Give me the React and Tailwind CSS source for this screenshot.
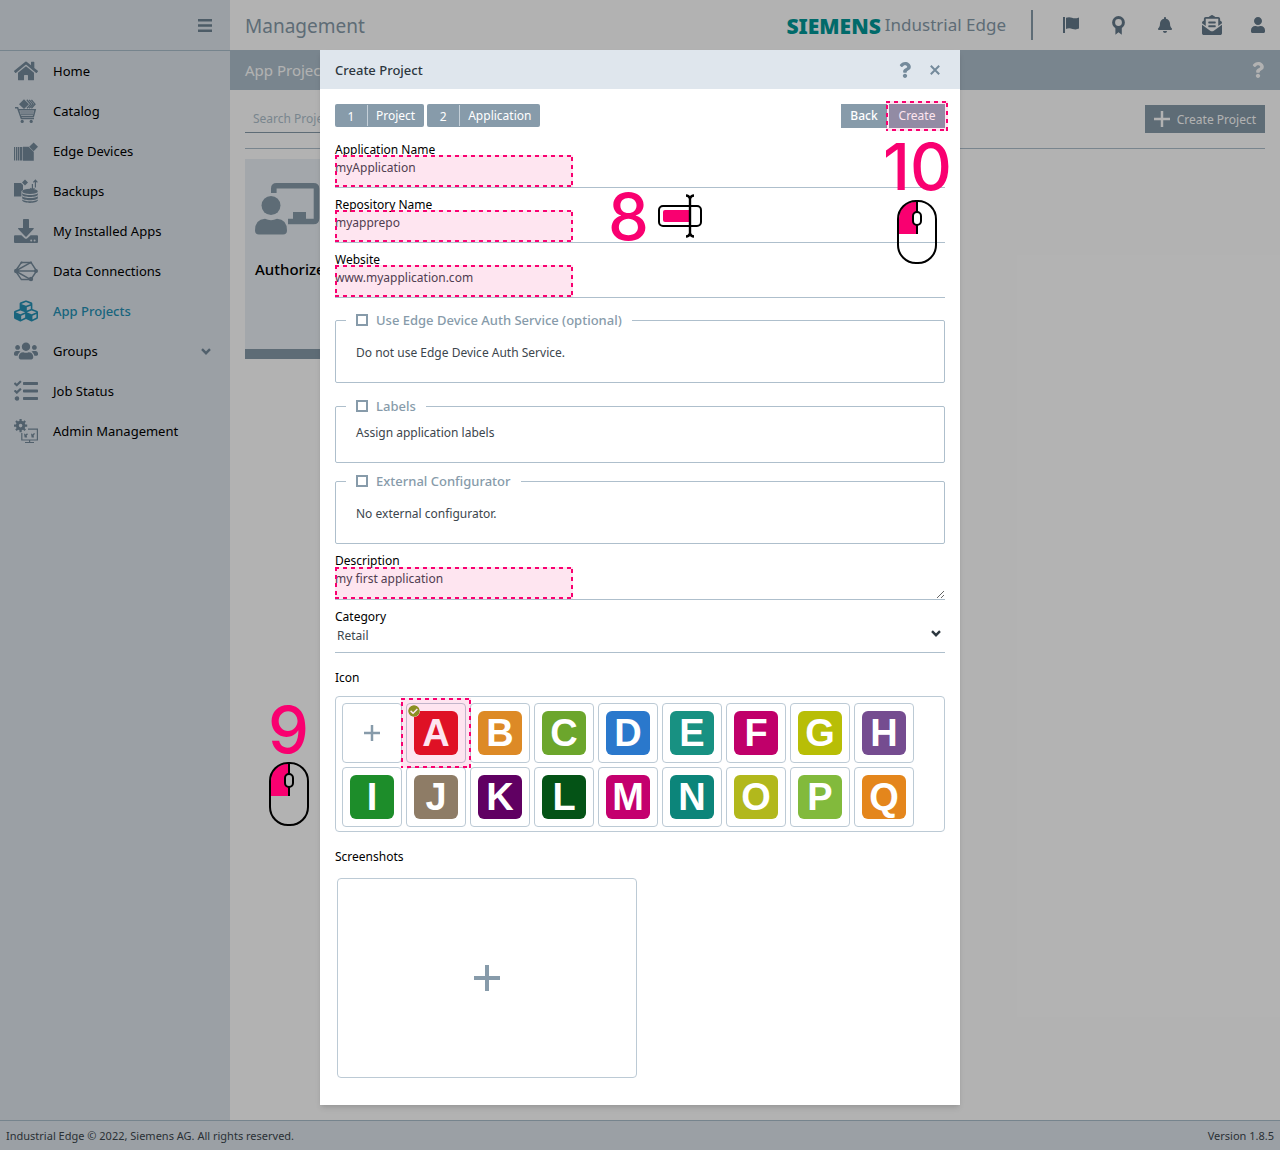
import React from "react";
import {
  FaHome,
  FaCubes,
  FaUsers,
  FaTasks,
  FaBell,
  FaEnvelopeOpenText,
  FaUser,
  FaQuestion,
  FaCheckCircle,
} from "react-icons/fa";

const svg = (children) => (
  <svg viewBox="0 0 24 24" className="size-6" fill="currentColor" aria-hidden="true">
    {children}
  </svg>
);

const CatalogIcon = () =>
  svg(
    <>
      <path d="M10 0.2 15 5.2 10 10 5 5.2Z" />
      <g fill="none" stroke="currentColor" strokeWidth="1.300">
        <path d="M12.800 .8 16.800 5.200 13 9.200M15.200 .8 19 5.200 15.200 9.200M17.400 .8 21 5.200 17.400 9.200" />
        <path d="M1 8.800h2.600L7.400 19.600H20" strokeWidth="1.500" />
        <path d="M4.800 10.800H21.200L19.400 17.400H6.600" strokeWidth="1.500" />
        <path d="M6.200 13h13.400M7 15.200h12" strokeWidth="1.200" />
      </g>
      <circle cx="8.200" cy="22.400" r="1.600" />
      <circle cx="17.200" cy="22.400" r="1.600" />
    </>
  );

const EdgeIcon = () =>
  svg(
    <>
      <path d="M0 8h1.200v13.600H0zM2 8h1.200v13.600H2zM3.800 8h1.600v13.600H3.800zM6 8h2.400v13.600H6z" />
      <path d="M9 7.800h5.600L19.800 13v8.800H9z" />
      <path d="M19.600 3.400 24 7.800 19.600 12.200 15.200 7.800Z" />
    </>
  );

const BackupsIcon = () =>
  svg(
    <>
      <path d="M0 4h7l2 2v5l-1.600 1v5.400H0z" />
      <path d="M11 .6 14 3.600 11 6.600 8 3.600Z" />
      <path d="M18.400 5v6M16.400 9.200l2 2.200 2-2.200M21.400 8.500V1.600M19.400 3.400l2-2.200 2 2.200" fill="none" stroke="currentColor" strokeWidth="1.200" />
      <ellipse cx="16" cy="12.400" rx="7.800" ry="2.600" />
      <path d="M8.200 14.200c1.600 2.400 14 2.400 15.600 0v1.900c-1.400 2.600-14.200 2.600-15.600 0zM8.200 17.300c1.600 2.400 14 2.400 15.600 0v1.900c-1.400 2.600-14.200 2.600-15.600 0zM8.200 20.400c1.600 2.400 14 2.400 15.600 0v1.200c-1.400 3.200-14.200 3.200-15.600 0z" />
    </>
  );

const InstalledIcon = () =>
  svg(
    <>
      <path d="M9 .8Q9 0 9.800 0h4.400q.8 0 .8.8V9h4.400q.8.2.2 1L12.600 17.400q-.6.6-1.200 0L4.200 10q-.6-.8.4-1H9z" />
      <path
        fillRule="evenodd"
        d="M1 16.200h6.400l3.200 3q1.400 1 2.800 0l3.200-3H23q1 0 1 1V23q0 1-1 1H1q-1 0-1-1v-5.800q0-1 1-1zM16.200 21.400a1 1 0 1 0 2 0 1 1 0 1 0-2 0zM19.600 21.400a1 1 0 1 0 2 0 1 1 0 1 0-2 0z"
      />
    </>
  );

const ConnectionsIcon = () =>
  svg(
    <>
      <g fill="none" stroke="currentColor" strokeWidth="1.500">
        <path d="M1.500 12 7.400 3.400H17L22.600 12 16.800 20.600H7.400Z" />
        <path d="M1.500 12H22.600M1.500 12 17 3.400M1.500 12 16.800 20.600" />
      </g>
      <circle cx="2.200" cy="12" r="2.200" />
      <circle cx="22" cy="12" r="2" />
      <circle cx="17" cy="20" r="2.200" />
      <circle cx="7.600" cy="3.600" r="1.100" />
      <circle cx="17" cy="3.600" r="1.100" />
    </>
  );

const AdminIcon = () =>
  svg(
    <>
      <circle cx="6.600" cy="6.600" r="3.300" fill="none" stroke="currentColor" strokeWidth="3" />
      <g stroke="currentColor" strokeWidth="2.200">
        <path d="M6.600 0v3M6.600 10.200v3M0 6.600h3M10.200 6.600h3M2 2l2.200 2.200M9 9l2.200 2.200M11.200 2 9 4.200M4.200 9 2 11.200" />
      </g>
      <path d="M14 10.200H23.400V21H7.800V14" fill="none" stroke="currentColor" strokeWidth="1.200" />
      <path d="M11 23.500h9M15.600 21v2.500" stroke="currentColor" strokeWidth="1.200" />
      <path d="M10 14.200l1.400 1.400 1.400-1 1.400.4-1.600 1.600.6 1.800H10.600l-.2-1.400zM17 14.200l1.400 1.400 1.400-1.400 1.400.4-1.600 2 .4 1.800h-2.400l-.2-1.400z" />
    </>
  );

const FlagIcon = () => (
  <svg viewBox="0 0 16 16" className="size-4" fill="currentColor" aria-hidden="true">
    <path d="M0 0h2v16H0zM3 .8Q6-.4 9 .8t7-.4V11.600Q13 13 9.500 11.900T3 12z" />
  </svg>
);

const RibbonIcon = () => (
  <svg viewBox="0 0 13 19" className="h-[19px] w-[13px]" aria-hidden="true">
    <circle cx="6.500" cy="6.500" r="4.900" fill="none" stroke="currentColor" strokeWidth="3" />
    <path d="M3.400 10.500h6.400V18.800L6.500 16.200 3.400 18.800Z" fill="currentColor" />
  </svg>
);

const BoardIcon = () => (
  <svg viewBox="0 0 65 52" className="h-[52px] w-[65px]" fill="currentColor" aria-hidden="true">
    <path d="M18.800 10V5.500Q18.800 2.800 21.500 2.800H58.500Q61.500 2.800 61.500 5.500V35.500Q61.500 38.500 58.500 38.500H33" fill="none" stroke="currentColor" strokeWidth="5.600" />
    <rect x="38" y="29" width="13" height="10" />
    <circle cx="16" cy="22.500" r="9.500" />
    <path d="M10 35.800Q16 38.600 22 35.800Q32 36.500 32 47.500Q32 51.500 28 51.500H4Q0 51.500 0 47.500Q0 36.500 10 35.800Z" />
  </svg>
);

const Chevron = ({ className }) => (
  <svg viewBox="0 0 10 7" className={`h-[7px] w-2.5 ${className}`} aria-hidden="true">
    <path d="M1 1.200 5 5.200 9 1.200" fill="none" stroke="currentColor" strokeWidth="2.400" />
  </svg>
);

const nav = [
  { label: "Home", icon: <FaHome className="size-6" /> },
  { label: "Catalog", icon: <CatalogIcon /> },
  { label: "Edge Devices", icon: <EdgeIcon /> },
  { label: "Backups", icon: <BackupsIcon /> },
  { label: "My Installed Apps", icon: <InstalledIcon /> },
  { label: "Data Connections", icon: <ConnectionsIcon /> },
  { label: "App Projects", icon: <FaCubes className="size-6" />, active: true },
  { label: "Groups", icon: <FaUsers className="size-6" />, expandable: true },
  { label: "Job Status", icon: <FaTasks className="size-6" /> },
  { label: "Admin Management", icon: <AdminIcon /> },
];

const tiles = [
  ["A", "bg-[#dc131d]"],
  ["B", "bg-[#dd8a26]"],
  ["C", "bg-[#6ca62c]"],
  ["D", "bg-[#2a78cc]"],
  ["E", "bg-[#189182]"],
  ["F", "bg-[#c0006a]"],
  ["G", "bg-[#b8be06]"],
  ["H", "bg-[#754c90]"],
  ["I", "bg-[#1d8d2a]"],
  ["J", "bg-[#8e7c66]"],
  ["K", "bg-[#600062]"],
  ["L", "bg-[#045316]"],
  ["M", "bg-[#c4006e]"],
  ["N", "bg-[#0c857a]"],
  ["O", "bg-[#b2b81c]"],
  ["P", "bg-[#82ba3c]"],
  ["Q", "bg-[#e4861c]"],
];

function Highlight({ className }) {
  return (
    <svg className={`pointer-events-none absolute z-10 bg-[#f90070]/10 ${className}`} aria-hidden="true">
      <rect width="100%" height="100%" fill="none" stroke="#f90070" strokeWidth="4" strokeDasharray="4 4" />
    </svg>
  );
}

function StepNumber({ children, className }) {
  return (
    <span className={`pointer-events-none absolute font-['Inter',sans-serif] text-[65px] leading-[64px] font-medium text-[#f90070] ${className}`}>
      {children}
    </span>
  );
}

function Mouse({ className }) {
  return (
    <svg viewBox="0 0 40 64" className={`pointer-events-none absolute h-16 w-10 ${className}`} aria-hidden="true">
      <path d="M20 1.500V34H2V19Q2 3 20 1.500Z" fill="#f90070" />
      <rect x="1" y="1" width="38" height="62" rx="18" fill="none" stroke="#000" strokeWidth="2" />
      <path d="M20 1V34" stroke="#000" strokeWidth="2" />
      <rect x="16" y="12" width="8" height="13" rx="4" className="fill-white" stroke="#000" strokeWidth="2" />
    </svg>
  );
}

function TypeIcon({ className }) {
  return (
    <svg viewBox="0 0 44 44" className={`pointer-events-none absolute size-11 ${className}`} aria-hidden="true">
      <rect x="1" y="12" width="42" height="20" rx="4" fill="#fff" stroke="#000" strokeWidth="2" />
      <rect x="5" y="16" width="28" height="12" rx="2" fill="#f90070" />
      <path d="M32 3V41M28 1.500Q31 1.500 32 4.500Q33 1.500 36 1.500M28 42.500Q31 42.500 32 39.500Q33 42.500 36 42.500" fill="none" stroke="#000" strokeWidth="2.400" />
    </svg>
  );
}

function Field({ id, label, value }) {
  return (
    <div className="relative pt-[9px]">
      <label htmlFor={id} className="block text-xs leading-4 text-black">{label}</label>
      <input id={id} defaultValue={value} className="block h-[30px] w-full border-b border-[#aebfcc] pb-[11px] text-xs text-[#3c464d] outline-none" />
      <Highlight className="bottom-px left-0 h-8 w-[238px]" />
    </div>
  );
}

function Option({ label, text, className, textClass }) {
  return (
    <fieldset className={`rounded-xs border border-[#aebfcc] px-[10px] ${className}`}>
      <legend className="px-[10px]">
        <label className="flex h-4 items-center gap-2 text-[13px] font-medium text-[#879baa]">
          <input type="checkbox" className="size-3 appearance-none border-2 border-[#879baa] bg-white" />
          <span className="pt-0.5">{label}</span>
        </label>
      </legend>
      <p className={`px-[10px] text-xs leading-[18px] text-[#3c464d] ${textClass}`}>{text}</p>
    </fieldset>
  );
}

function Step({ n, label }) {
  return (
    <button className="flex h-[23px] items-center rounded-xs bg-[#879baa] text-xs text-white">
      <span className="w-8 pt-0.5 text-center">{n}</span>
      <span className="flex h-[21px] items-center border-l border-[#c5d0d9] pr-[9px] pl-2">{label}</span>
    </button>
  );
}

function Plus({ className }) {
  return (
    <svg viewBox="0 0 26 26" className={className} aria-hidden="true">
      <path d="M13 0V26M0 13H26" stroke="currentColor" strokeWidth="4" />
    </svg>
  );
}

function CreateProjectDialog() {
  return (
    <div role="dialog" aria-label="Create Project" className="relative w-full max-w-[640px] bg-white pb-[27px] shadow-md">
      <header className="flex h-[39px] items-center justify-between bg-[#dfe6ed] px-[15px]">
        <h2 className="pt-0.5 text-[13px] font-medium text-[#2d373f]">Create Project</h2>
        <div className="flex items-center gap-[17px] pr-[5px] text-[#748a9b]">
          <button aria-label="Help"><FaQuestion className="size-4" /></button>
          <button aria-label="Close">
            <svg viewBox="0 0 10 10" className="size-2.5" aria-hidden="true">
              <path d="M.8.8 9.200 9.200M9.200.8.8 9.200" stroke="currentColor" strokeWidth="2" />
            </svg>
          </button>
        </div>
      </header>

      <form className="px-[15px] pt-[15px]" onSubmit={(e) => e.preventDefault()}>
        <div className="mb-[5px] flex items-start justify-between">
          <div className="flex gap-[3px]">
            <Step n="1" label="Project" />
            <Step n="2" label="Application" />
          </div>
          <div className="flex gap-[2px] text-xs text-white">
            <button className="h-6 w-[46px] bg-[#879baa] font-medium">Back</button>
            <div className="relative">
              <button className="h-6 w-14 bg-[#879baa]">Create</button>
              <Highlight className="-top-[3px] -left-[3px] h-[30px] w-[calc(100%+6px)]" />
            </div>
          </div>
        </div>

        <Field id="app" label="Application Name" value="myApplication" />
        <Field id="repo" label="Repository Name" value="myapprepo" />
        <Field id="site" label="Website" value="www.myapplication.com" />

        <Option className="mt-[14px] pb-5" textClass="mt-4" label="Use Edge Device Auth Service (optional)" text="Do not use Edge Device Auth Service." />
        <Option className="mt-[15px] pb-5" textClass="mt-[10px]" label="Labels" text="Assign application labels" />
        <Option className="mt-[10px] pb-5" textClass="mt-4" label="External Configurator" text="No external configurator." />

        <div className="relative pt-[9px]">
          <label htmlFor="desc" className="block text-xs leading-4 text-black">Description</label>
          <textarea id="desc" defaultValue="my first application" className="block h-[31px] w-full resize-y overflow-hidden border-b border-[#aebfcc] text-xs leading-5 text-[#3c464d] outline-none" />
          <Highlight className="bottom-px left-0 h-8 w-[238px]" />
        </div>

        <div className="relative pt-[9px]">
          <label htmlFor="cat" className="block text-xs leading-4 text-black">Category</label>
          <select id="cat" className="block h-7 w-full appearance-none border-b border-[#aebfcc] pb-[5px] pl-[2px] text-xs text-[#3c464d] outline-none">
            <option>Retail</option>
          </select>
          <Chevron className="pointer-events-none absolute right-1 bottom-4 text-[#2d373f]" />
        </div>

        <h3 className="mt-4 text-xs leading-[18px] text-black">Icon</h3>
        <div className="mt-[9px] flex flex-wrap gap-1 rounded border border-[#bccad5] px-1.5 pt-1.5 pb-1">
          <button aria-label="Add icon" className="flex size-[60px] items-center justify-center rounded border border-[#bccad5] text-[#879baa]">
            <Plus className="size-4" />
          </button>
          {tiles.map(([letter, bg]) => (
            <div key={letter} className="relative">
              <button className="flex size-[60px] items-center justify-center rounded border border-[#bccad5]">
                <span className={`flex size-11 items-center justify-center rounded-md font-['Liberation_Sans',sans-serif] text-[38px] leading-none font-bold text-white ${bg}`}>{letter}</span>
              </button>
              {letter === "A" && (
                <>
                  <FaCheckCircle className="absolute top-[2px] left-[2px] size-3 rounded-full bg-white text-[#7fa01a]" />
                  <Highlight className="-top-[5px] -left-[5px] size-[70px]" />
                </>
              )}
            </div>
          ))}
        </div>

        <h3 className="mt-4 text-xs leading-[18px] text-black">Screenshots</h3>
        <button aria-label="Add screenshot" className="mt-3 ml-[2px] flex h-[200px] w-[300px] items-center justify-center rounded border border-[#bccad5] text-[#879baa]">
          <Plus className="size-[26px]" />
        </button>
      </form>

      <StepNumber className="top-[135px] left-[288px]">8</StepNumber>
      <TypeIcon className="top-[144px] left-[338px]" />
      <StepNumber className="top-[85px] right-[8px]">10</StepNumber>
      <Mouse className="top-[150px] right-[23px]" />
      <StepNumber className="top-[648px] -left-[52px]">9</StepNumber>
      <Mouse className="top-[712px] -left-[51px] [&_.fill-white]:fill-[#b2b2b2]" />
    </div>
  );
}

export default function App() {
  return (
    <div className="flex min-h-screen flex-col bg-white font-['Noto_Sans',sans-serif]">
      <div className="flex flex-1">
        <aside className="w-[230px] shrink-0 bg-[#dfe6ed]">
          <div className="flex h-[51px] items-center justify-end border-b border-[#aabdcb] pr-[18px] text-[#6f8494]">
            <button aria-label="Toggle menu">
              <svg viewBox="0 0 14 13" className="h-[13px] w-3.5" fill="currentColor" aria-hidden="true">
                <path d="M0 0h14v2.600H0zM0 5.200h14v2.600H0zM0 10.400h14v2.600H0z" />
              </svg>
            </button>
          </div>
          <nav>
            {nav.map((item) => (
              <a
                key={item.label}
                href="#"
                className={`flex h-10 items-center pr-[19px] pl-[14px] text-[13px] ${item.active ? "font-medium text-[#2490b4]" : "text-black"}`}
              >
                <span className={`mr-[15px] ${item.active ? "" : "text-[#748a9b]"}`}>{item.icon}</span>
                <span className="flex-1 pt-0.5">{item.label}</span>
                {item.expandable && <Chevron className="text-[#748a9b]" />}
              </a>
            ))}
          </nav>
        </aside>

        <div className="min-w-0 flex-1">
          <header className="flex h-[50px] items-center justify-between px-[15px]">
            <h1 className="pt-0.5 text-[19px] text-[#879baa]">Management</h1>
            <div className="flex items-center">
              <span className="pt-0.5 text-[21px] leading-6 font-black text-[#009999]">SIEMENS</span>
              <span className="ml-1 text-[17px] text-[#879baa]">Industrial Edge</span>
              <span className="mr-[30px] ml-[25px] h-[30px] w-0.5 bg-[#879baa]" />
              <div className="flex items-center text-[#64798a]">
                <button aria-label="Flag" className="mr-[33px]"><FlagIcon /></button>
                <button aria-label="Certificates" className="mr-[33px]"><RibbonIcon /></button>
                <button aria-label="Notifications" className="mr-[30px]"><FaBell className="h-4 w-3.5" /></button>
                <button aria-label="Messages" className="mr-[29px]"><FaEnvelopeOpenText className="size-5" /></button>
                <button aria-label="Account"><FaUser className="h-4 w-3.5" /></button>
              </div>
            </div>
          </header>
          <div className="flex h-10 items-center justify-between bg-[#aebfcc] px-[15px] text-white">
            <span className="text-[15px]">App Projects</span>
            <button aria-label="Page help"><FaQuestion className="h-4 w-3.5" /></button>
          </div>
          <main className="px-[15px] pt-[15px]">
            <div className="flex items-start justify-between border-b border-[#aebfcc] pb-[15px]">
              <input aria-label="Search Projects" placeholder="Search Projects" className="h-7 w-[240px] border-b border-[#879baa] px-2 text-xs outline-none placeholder:text-[#aebfcc]" />
              <button className="flex h-7 w-[120px] items-center justify-between bg-[#879baa] px-[9px] text-xs text-white">
                <Plus className="size-4" />
                <span className="pt-0.5">Create Project</span>
              </button>
            </div>
            <section className="mt-[10px] h-[200px] w-[240px] border-b-[10px] border-[#879baa] bg-[#eaf0f5] px-[10px] pt-6 text-[#879baa]">
              <BoardIcon />
              <h2 className="mt-[23px] text-[15px] font-medium text-black">Authorize</h2>
            </section>
          </main>
        </div>
      </div>

      <footer className="flex h-[30px] items-center justify-between border-t border-[#aabdcb] bg-[#dfe6ed] px-1.5 pt-0.5 text-[11px] text-[#3c464d]">
        <span>Industrial Edge © 2022, Siemens AG. All rights reserved.</span>
        <span>Version 1.8.5</span>
      </footer>

      <div className="absolute inset-0 flex items-start justify-center bg-black/30 pt-[50px]">
        <CreateProjectDialog />
      </div>
    </div>
  );
}
